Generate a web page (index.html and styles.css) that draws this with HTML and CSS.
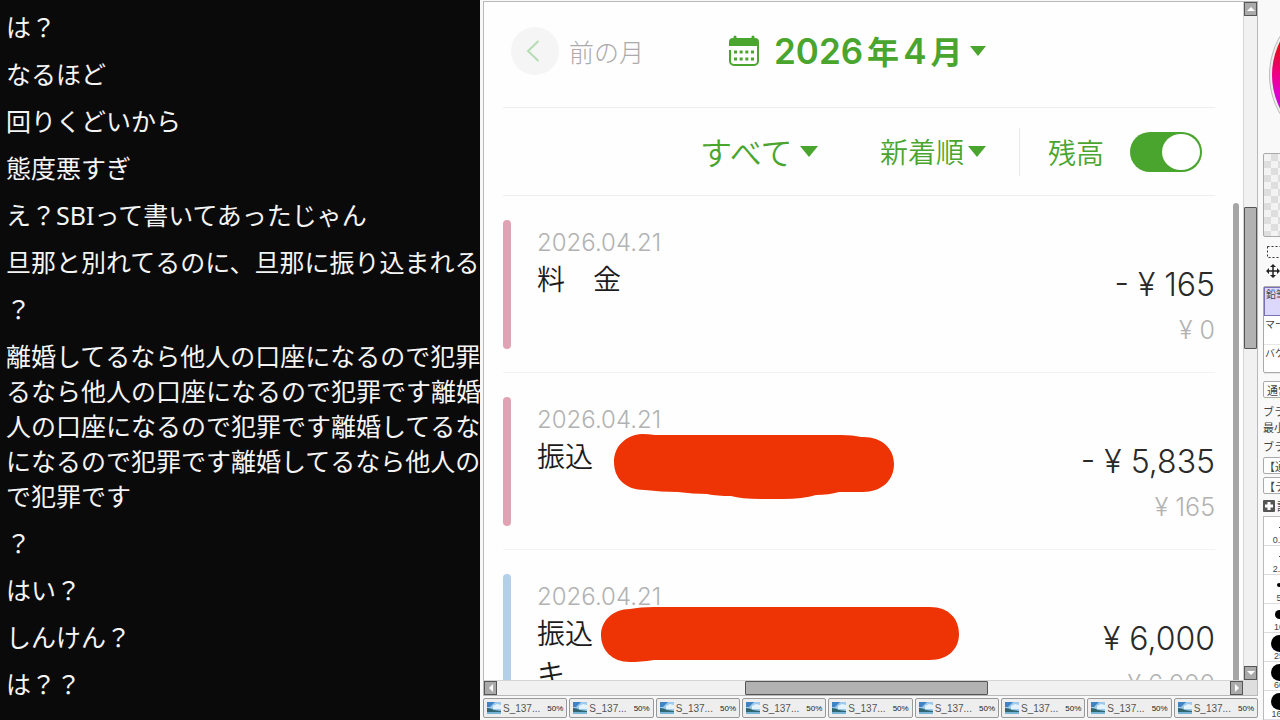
FILE: index.html
```
<!DOCTYPE html>
<html lang="ja">

<head>
	<meta charset="UTF-8">
	<meta name="viewport" content="width=device-width, initial-scale=1.0">
	<title>2026年4月</title>
	<link rel="stylesheet" href="styles.css">
</head>

<body>
	<div class="screen">
		<div class="chat">
			<p>は？</p>
			<p>なるほど</p>
			<p>回りくどいから</p>
			<p>態度悪すぎ</p>
			<p>え？SBIって書いてあったじゃん</p>
			<p>旦那と別れてるのに、旦那に振り込まれるの</p>
			<p>？</p>
			<p>離婚してるなら他人の口座になるので犯罪<br>るなら他人の口座になるので犯罪です離婚<br>人の口座になるので犯罪です離婚してるな<br>になるので犯罪です離婚してるなら他人の<br>で犯罪です</p>
			<p>？</p>
			<p>はい？</p>
			<p>しんけん？</p>
			<p>は？？</p>
		</div>

		<div class="editor">
			<div class="view">
				<div class="canvas">
					<div class="month">
						<button class="month__prev">
							<span class="month__circle">
								<svg width="14" height="24" viewBox="0 0 14 24"><path d="M12.500 2L2 12l10.500 10" fill="none" stroke="#b5dcb4" stroke-width="2" /></svg>
							</span>
							前の月
						</button>
						<button class="month__current">
							<svg width="32" height="32" viewBox="0 0 32 32">
								<path d="M5 3h22a4 4 0 0 1 4 4v4H1V7a4 4 0 0 1 4-4z" fill="#4aa52f" />
								<path d="M7 2v4M25 2v4" stroke="#4aa52f" stroke-width="3" stroke-linecap="round" />
								<path d="M2 15v11a4 4 0 0 0 4 4h20a4 4 0 0 0 4-4V10" fill="none" stroke="#4aa52f" stroke-width="2" />
								<path d="M6 17h20M6 24h20" stroke="#4aa52f" stroke-width="3" stroke-dasharray="3 2.660" />
							</svg>
							<span class="month__text"><span>2026</span><span class="month__kanji">年</span><span>4</span><span class="month__kanji">月</span></span>
							<span class="caret caret_small"></span>
						</button>
					</div>

					<div class="filter">
						<label class="filter__select filter__select_type">
							<select aria-label="種類"><option>すべて</option></select>
							<span class="caret"></span>
						</label>
						<label class="filter__select">
							<select aria-label="並び順"><option>新着順</option></select>
							<span class="caret"></span>
						</label>
						<label class="filter__balance">
							残高
							<input type="checkbox" class="toggle" checked>
						</label>
					</div>

					<div class="list">
						<div class="record">
							<div class="record__bar"></div>
							<div class="record__info">
								<div class="record__date">2026.04.21</div>
								<div class="record__name">料　金</div>
							</div>
							<div class="record__sum">
								<div class="record__amount">- ¥ 165</div>
								<div class="record__balance">¥ 0</div>
							</div>
						</div>
						<div class="record">
							<div class="record__bar"></div>
							<div class="record__info">
								<div class="record__date">2026.04.21</div>
								<div class="record__name">振込</div>
							</div>
							<div class="record__sum">
								<div class="record__amount">- ¥ 5,835</div>
								<div class="record__balance">¥ 165</div>
							</div>
							<svg class="paint paint_first" width="282" height="66" viewBox="0 0 282 66">
								<path d="M29 1Q35 1 42 2H228Q240 2 248 4C268 3 281 15 281 31C281 48 268 59 250 59H226Q216 62 203 62Q190 66 170 66H148Q128 66 118 63Q104 63 94 61Q80 61 65 59Q48 59 32 57C12 57 1 45 1 29C1 13 13 2 29 1Z" fill="#ee3305" />
							</svg>
						</div>
						<div class="record">
							<div class="record__bar record__bar_in"></div>
							<div class="record__info">
								<div class="record__date">2026.04.21</div>
								<div class="record__name">振込<br>キ</div>
							</div>
							<div class="record__sum">
								<div class="record__amount">¥ 6,000</div>
								<div class="record__balance">¥ 6,000</div>
							</div>
							<svg class="paint paint_second" width="360" height="58" viewBox="0 0 360 58">
								<path d="M30 3Q40 1 54 1H330C349 1 359 13 359 28C359 43 348 54 330 54H54Q40 56 30 56C12 56 1 44 1 29C1 15 13 3 30 3Z" fill="#ee3305" />
							</svg>
						</div>
						<div class="list__scroll"></div>
					</div>
				</div>
				<div class="vbar">
					<button class="bar-btn" aria-label="上"><svg width="8" height="8" viewBox="0 0 8 8"><path d="M0 6l4-4 4 4z" fill="#fff" /></svg></button>
					<div class="vbar__thumb"></div>
					<button class="bar-btn" aria-label="下"><svg width="8" height="8" viewBox="0 0 8 8"><path d="M0 2l4 4 4-4z" fill="#fff" /></svg></button>
				</div>
				<div class="hbar">
					<button class="bar-btn" aria-label="左"><svg width="8" height="8" viewBox="0 0 8 8"><path d="M6 0L2 4l4 4z" fill="#fff" /></svg></button>
					<div class="hbar__thumb"></div>
					<button class="bar-btn" aria-label="右"><svg width="8" height="8" viewBox="0 0 8 8"><path d="M2 0l4 4-4 4z" fill="#fff" /></svg></button>
				</div>
				<div class="corner"></div>
			</div>
			<div class="tabs"></div>
		</div>

		<div class="tools">
			<div class="wheel"></div>
			<div class="swatch"></div>
			<div class="tools__icons">
				<svg width="20" height="14" viewBox="0 0 20 14"><rect x="1.500" y="1.500" width="22" height="11" fill="none" stroke="#333" stroke-dasharray="2 2" /></svg>
				<svg width="20" height="16" viewBox="0 0 20 16"><path d="M1 8h12M7 2v12" stroke="#222" stroke-width="1.500" /><path d="M0 8l3-3v6zM14 8l-3-3v6zM7 1l3 3H4zM7 15l3-3H4z" fill="#222" /></svg>
			</div>
			<div class="brushes">
				<div class="brushes__item brushes__item_active">鉛筆</div>
				<div class="brushes__item">マー</div>
				<div class="brushes__item">バケ</div>
			</div>
			<button class="tools__btn tools__btn_mode">通常</button>
			<div class="tools__label">ブラ</div>
			<div class="tools__label">最小</div>
			<div class="tools__label tools__label_last">ブラ</div>
			<button class="tools__btn">【通</button>
			<button class="tools__btn">【テ</button>
			<div class="tools__detail">
				<svg width="12" height="12" viewBox="0 0 12 12"><rect width="12" height="12" rx="1" fill="#555" /><path d="M6 2v8M2 6h8" stroke="#fff" stroke-width="3" /></svg>
				詳
			</div>
			<div class="sizes"></div>
		</div>
	</div>
	<script>
		const tabs = document.querySelector('.tabs');
		const sizes = document.querySelector('.sizes');
		const brushes = [['0.7', 1], ['2.0', 1], ['5', 4], ['10', 9], ['25', 17], ['60', 17], ['160', 17]];

		for (let i = 0; i < 9; i++) {
			tabs.innerHTML += `<button class="tab">
				<svg width="14" height="12" viewBox="0 0 14 12"><rect width="14" height="12" fill="#9cc9ec" /><path d="M0 0h8L3 5H0z" fill="#3f83c4" /><path d="M6 4l4-2 4 1v4H6z" fill="#e4f3fb" /><path d="M0 6q4 0 7 2l7 1v3H0z" fill="#2f6672" /><path d="M0 10h14v2H0z" fill="#77b4d8" /></svg>
				<span class="tab__name">S_137...</span><span class="tab__zoom">50%</span></button>`;
		}

		brushes.forEach(([name, size]) => {
			sizes.innerHTML += `<div class="size"><div class="size__place"><div class="size__dot" style="width:${size}px;height:${size}px"></div></div>${name}</div>`;
		});
	</script>
</body>

</html>
```
FILE: styles.css
```
* {
	box-sizing: border-box;
}

body {
	margin: 0;
	font-family: Inter, "Noto Sans CJK JP", sans-serif;
	background: #f8f8f8;
}

button,
select {
	font: inherit;
	color: inherit;
	background: none;
	border: none;
	padding: 0;
	margin: 0;
}

svg {
	flex: none;
}

.screen {
	display: flex;
	height: 100vh;
	overflow: hidden;
}

/* chat */

.chat {
	flex: 0 0 37.5%;
	padding: 10px 0 0 6px;
	overflow: hidden;
	white-space: nowrap;
	background: #0a0a0a;
	color: #f4f4f4;
	font-family: "Noto Sans", "Noto Sans CJK JP", sans-serif;
	font-size: 25px;
	line-height: 35px;
}

.chat p {
	margin: 0 0 12px;
}

/* editor window */

.editor {
	flex: 1;
	min-width: 0;
	display: flex;
	flex-direction: column;
	gap: 2px;
	padding: 1px 0 2px 3px;
}

.view {
	flex: 1;
	min-height: 0;
	display: grid;
	grid-template-columns: minmax(0, 1fr) 14px;
	grid-template-rows: minmax(0, 1fr) 15px;
	border: 1px solid #b9b9b9;
	background: #f0f0f0;
}

.canvas {
	overflow: hidden;
	padding: 0 28px 0 19px;
	background: #fefefe;
}

.vbar,
.hbar {
	display: flex;
	justify-content: space-between;
	background: #f1f1f1;
}

.vbar {
	flex-direction: column;
	border-left: 1px solid #d4d4d4;
}

.hbar {
	border-top: 1px solid #d4d4d4;
}

.vbar__thumb {
	height: 21%;
	margin-bottom: 254px;
	margin-top: 128px;
	background: #b2b2b2;
	border: 1px solid #555;
	border-radius: 1px;
}

.hbar__thumb {
	width: 32%;
	margin-left: 6px;
	background: #b2b2b2;
	border: 1px solid #555;
	border-radius: 1px;
}

.corner {
	background: #dedede;
}

.bar-btn {
	flex: none;
	display: flex;
	align-items: center;
	justify-content: center;
	width: 13px;
	height: 14px;
	background: #aaa;
	border: 1px solid #555;
}

.tabs {
	display: grid;
	grid-template-columns: repeat(9, minmax(0, 1fr));
	gap: 2px;
}

.tab {
	display: flex;
	align-items: center;
	height: 20px;
	padding: 0 3px;
	border: 1px solid #999;
	border-radius: 2px;
	background: #eee;
	color: #555;
	font-family: "Liberation Sans", sans-serif;
	font-size: 10px;
}

.tab__name {
	flex: 1;
	margin-left: 2px;
	text-align: left;
}

.tab__zoom {
	font-size: 8px;
	color: #222;
}

/* month */

.month {
	display: flex;
	align-items: center;
	height: 106px;
	padding: 0 0 8px 8px;
	border-bottom: 1px solid #eee;
}

.month__prev {
	display: flex;
	align-items: center;
	gap: 10px;
	font-family: "Noto Sans CJK JP", sans-serif;
	font-size: 25px;
	font-weight: 300;
	line-height: 32px;
	color: #aaa;
}

.month__circle {
	display: flex;
	align-items: center;
	justify-content: center;
	width: 48px;
	height: 48px;
	padding-right: 4px;
	border-radius: 50%;
	background: #f4f5f4;
}

.month__current {
	display: flex;
	align-items: center;
	margin-left: 84px;
	color: #4aa52f;
	font-size: 35px;
	font-weight: 600;
}

.month__text {
	display: flex;
	align-items: baseline;
	gap: 4px;
	margin: 0 8px 0 14px;
	line-height: 40px;
}

.month__kanji {
	font-family: "Noto Sans CJK JP", sans-serif;
	font-size: 32px;
}

.caret {
	border: 9px solid transparent;
	border-top: 11px solid #4aa52f;
	border-bottom: none;
}

.caret_small {
	border-width: 10px 8px 0;
}

/* filter */

.filter {
	display: flex;
	align-items: center;
	justify-content: flex-end;
	height: 88px;
	padding: 0 13px 0 0;
	border-bottom: 1px solid #eee;
	color: #4aa52f;
	font-family: "Noto Sans CJK JP", sans-serif;
	font-size: 28px;
	font-weight: 350;
}

.filter__select {
	display: flex;
	align-items: center;
	gap: 3px;
	margin-right: 33px;
}

.filter__select_type {
	margin-right: 62px;
	font-size: 32px;
}

.filter select {
	appearance: none;
	padding-bottom: 2px;
}

.filter__balance {
	display: flex;
	align-items: center;
	gap: 26px;
	height: 48px;
	padding-left: 28px;
	border-left: 1px solid #e8e8e8;
}

.toggle {
	appearance: none;
	display: flex;
	justify-content: flex-end;
	width: 72px;
	height: 40px;
	margin: 0;
	padding: 2px;
	border-radius: 20px;
	background: #4aa52f;
}

.toggle::before {
	content: "";
	width: 38px;
	height: 36px;
	border-radius: 50%;
	background: #fff;
}

/* records */

.list {
	position: relative;
}

.list__scroll {
	position: absolute;
	top: 7px;
	right: -24px;
	bottom: 0;
	width: 6px;
	border-radius: 3px;
	background: #a6a6a6;
}

.record {
	position: relative;
	display: flex;
	height: 177px;
	padding: 24px 0 23px;
	border-bottom: 1px solid #f3f3f3;
}

.record__bar {
	width: 8px;
	margin-right: 26px;
	border-radius: 4px;
	background: #dfa3b3;
}

.record__bar_in {
	background: #b4cfea;
}

.record__info {
	flex: 1;
	padding-top: 8px;
}

.record__date {
	font-size: 24px;
	font-weight: 350;
	line-height: 30px;
	color: #b2b2b2;
}

.record__name {
	font-family: "Noto Sans CJK JP", sans-serif;
	font-size: 28px;
	font-weight: 350;
	line-height: 40px;
	color: #1c1c1c;
}

.record__sum {
	padding-top: 42px;
	text-align: right;
}

.record__amount {
	font-size: 32px;
	font-weight: 350;
	line-height: 46px;
	color: #2a2a2a;
}

.record__balance {
	font-size: 25px;
	font-weight: 350;
	line-height: 44px;
	color: #b2b2b2;
}

.paint {
	position: absolute;
}

.paint_first {
	left: 110px;
	top: 60px;
}

.paint_second {
	left: 97px;
	top: 56px;
}

/* tool panel, runs off the right edge */

.tools {
	flex: 0 0 22px;
	position: relative;
	overflow: hidden;
	padding: 153px 0 0 5px;
	background: #f9f9f9;
	font-family: "Noto Sans CJK JP", sans-serif;
	font-size: 11px;
	line-height: 15px;
	color: #444;
	white-space: nowrap;
}

.wheel {
	position: absolute;
	left: 11px;
	top: -2px;
	width: 154px;
	height: 154px;
	padding: 2px;
	border: 1px solid #bbb;
	border-radius: 50%;
	background: conic-gradient(from 180deg, #40f, #d0c 75deg, #e08 90deg, #e01010 115deg, #f80 180deg, #0f0, #40f) content-box, #eee;
}

.swatch {
	width: 40px;
	height: 84px;
	border: 1px solid #aaa;
	border-radius: 2px;
	background: conic-gradient(#dedede 25%, #f3f3f3 0 50%, #dedede 0 75%, #f3f3f3 0) 0 0 / 14px 14px;
}

.tools__icons {
	display: flex;
	flex-direction: column;
	gap: 4px;
	padding: 8px 0 7px 3px;
}

.brushes {
	width: 60px;
	height: 87px;
	border: 1px solid #aaa;
	border-radius: 2px;
	background: #fff;
}

.brushes__item {
	height: 29px;
	padding-left: 1px;
	font-size: 10px;
	border-bottom: 1px solid #e6e6e6;
}

.brushes__item_active {
	background: #dcd8fb;
	border: 1px solid #7a70b8;
	line-height: 12px;
}

.tools__btn {
	display: block;
	width: 60px;
	height: 17px;
	margin-bottom: 3px;
	border: 1px solid #aaa;
	border-radius: 2px;
	background: #fff;
	text-align: left;
	line-height: 14px;
}

.tools__btn_mode {
	margin: 8px 0 5px;
	padding-left: 3px;
}

.tools__label {
	line-height: 16px;
}

.tools__label_last {
	margin: 3px 0;
}

.tools__detail {
	display: flex;
	align-items: center;
	gap: 2px;
	height: 18px;
}

.sizes {
	width: 60px;
	margin-top: 1px;
	border: 1px solid #bbb;
	background: #fff;
}

.size {
	width: 30px;
	height: 29px;
	border-bottom: 1px solid #ddd;
	font-family: "Liberation Sans", sans-serif;
	font-size: 9px;
	line-height: 6px;
	text-align: center;
}

.size__place {
	display: flex;
	align-items: center;
	justify-content: center;
	height: 20px;
}

.size__dot {
	flex: none;
	border-radius: 50%;
	background: #000;
}
```
